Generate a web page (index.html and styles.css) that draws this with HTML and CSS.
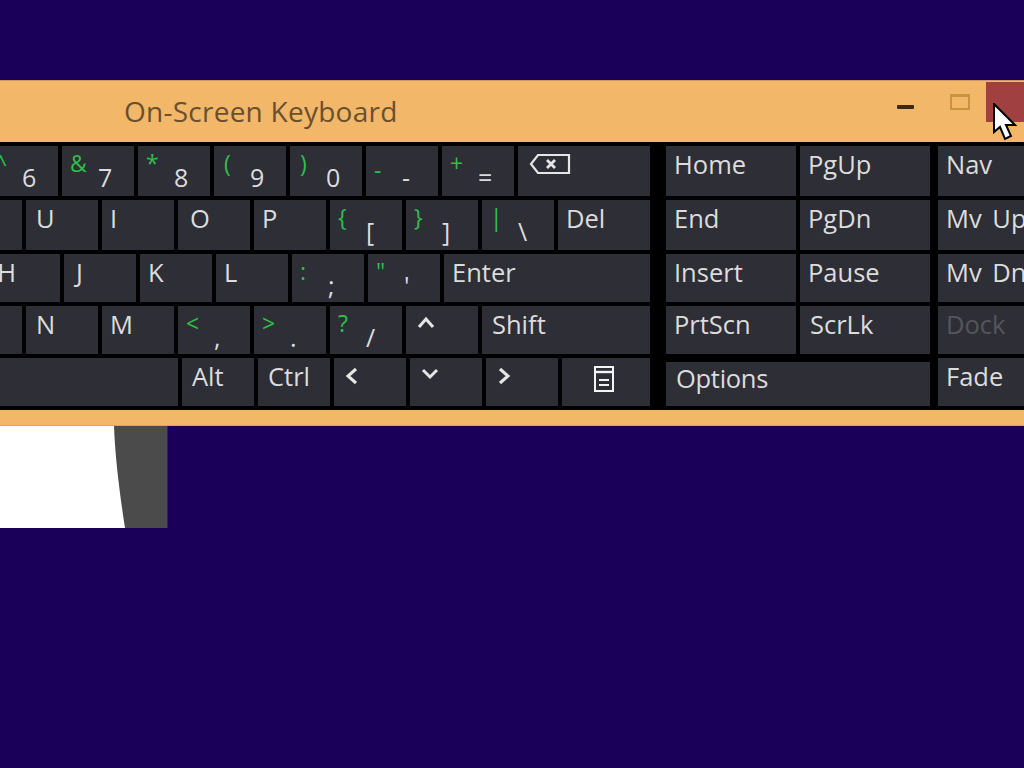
FILE: index.html
```html
<!DOCTYPE html>
<html lang="en">
<head>
<meta charset="utf-8">
<title>On-Screen Keyboard</title>
<link rel="stylesheet" href="styles.css">
</head>
<body>
<main class="desktop">
  <section class="window">
    <header class="titlebar">
      <h1 class="title">On-Screen Keyboard</h1>
      <div class="controls">
        <span class="min"></span>
        <span class="max"></span>
        <span class="close"></span>
      </div>
    </header>
    <div class="board">
      <div class="main-keys">
        <div class="row r1">
          <div class="key w58 dual"><span class="sym s-clip">^</span><span class="low">6</span></div>
          <div class="key dual"><span class="sym">&amp;</span><span class="low">7</span></div>
          <div class="key dual"><span class="sym">*</span><span class="low">8</span></div>
          <div class="key dual"><span class="sym s-paren">(</span><span class="low">9</span></div>
          <div class="key dual"><span class="sym s-paren">)</span><span class="low">0</span></div>
          <div class="key dual"><span class="sym s-minus">-</span><span class="low">-</span></div>
          <div class="key dual"><span class="sym">+</span><span class="low">=</span></div>
          <div class="key w132 icon-key">
            <svg class="bksp" width="42" height="22" viewBox="0 0 42 22"><path d="M9 2H40V20H9L2 11Z" fill="none" stroke="#e6e6e6" stroke-width="2.2"/><path d="M18 7l8 8M26 7l-8 8" stroke="#e6e6e6" stroke-width="2.8"/></svg>
          </div>
        </div>
        <div class="row r2">
          <div class="key w22"></div>
          <div class="key letter">U</div>
          <div class="key tight">I</div>
          <div class="key loose">O</div>
          <div class="key tight">P</div>
          <div class="key dual"><span class="sym">{</span><span class="low">[</span></div>
          <div class="key dual"><span class="sym">}</span><span class="low">]</span></div>
          <div class="key dual"><span class="sym">|</span><span class="low">\</span></div>
          <div class="key w92">Del</div>
        </div>
        <div class="row r3">
          <div class="key w60 clip-h">H</div>
          <div class="key loose">J</div>
          <div class="key tight">K</div>
          <div class="key tight">L</div>
          <div class="key dual"><span class="sym">:</span><span class="low">;</span></div>
          <div class="key dual"><span class="sym">"</span><span class="low">'</span></div>
          <div class="key w206">Enter</div>
        </div>
        <div class="row r3">
          <div class="key w22"></div>
          <div class="key letter">N</div>
          <div class="key tight">M</div>
          <div class="key dual"><span class="sym">&lt;</span><span class="low">,</span></div>
          <div class="key dual"><span class="sym">&gt;</span><span class="low">.</span></div>
          <div class="key dual"><span class="sym">?</span><span class="low">/</span></div>
          <div class="key icon-key">
            <svg class="chev" width="18" height="14" viewBox="0 0 18 14"><path d="M2 12L9 4L16 12" fill="none" stroke="#e6e6e6" stroke-width="3"/></svg>
          </div>
          <div class="key w168 letter">Shift</div>
        </div>
        <div class="row r3">
          <div class="key w178"></div>
          <div class="key letter">Alt</div>
          <div class="key letter">Ctrl</div>
          <div class="key icon-key">
            <svg class="chev" width="14" height="18" viewBox="0 0 14 18"><path d="M11 2L3 9L11 16" fill="none" stroke="#e6e6e6" stroke-width="3"/></svg>
          </div>
          <div class="key icon-key">
            <svg class="chev" width="18" height="14" viewBox="0 0 18 14"><path d="M2 3L9 10L16 3" fill="none" stroke="#e6e6e6" stroke-width="3"/></svg>
          </div>
          <div class="key icon-key">
            <svg class="chev" width="14" height="18" viewBox="0 0 14 18"><path d="M3 2L11 9L3 16" fill="none" stroke="#e6e6e6" stroke-width="3"/></svg>
          </div>
          <div class="key w88 icon-key">
            <svg class="menu" width="20" height="26" viewBox="0 0 20 26"><path d="M1 1H19V25H1Z" fill="none" stroke="#f4f4f4" stroke-width="2"/><path d="M1 6H19" stroke="#f4f4f4" stroke-width="2.4"/><path d="M5 14H15M5 19H15" stroke="#f4f4f4" stroke-width="1.8"/></svg>
          </div>
        </div>
      </div>
      <div class="side-keys">
        <div class="row r1"><div class="key w130">Home</div><div class="key w130">PgUp</div></div>
        <div class="row r2"><div class="key w130">End</div><div class="key w130">PgDn</div></div>
        <div class="row r3"><div class="key w130">Insert</div><div class="key w130">Pause</div></div>
        <div class="row r3"><div class="key w130">PrtScn</div><div class="key w130 letter">ScrLk</div></div>
        <div class="row options-row"><div class="key w264 options">Options</div></div>
      </div>
      <div class="tool-keys">
        <div class="row r1"><div class="key w90">Nav</div></div>
        <div class="row r2"><div class="key w90 spaced">Mv Up</div></div>
        <div class="row r3"><div class="key w90 spaced">Mv Dn</div></div>
        <div class="row r3"><div class="key w90 disabled">Dock</div></div>
        <div class="row r3"><div class="key w90">Fade</div></div>
      </div>
    </div>
  </section>
  <svg class="tile" width="168" height="102" viewBox="0 0 168 102">
    <rect width="167.5" height="102" fill="#4b4b4b"/>
    <path d="M0 0H114C115 30 120 70 125 102H0Z" fill="#ffffff"/>
  </svg>
  <svg class="cursor" width="26" height="38" viewBox="0 0 26 38">
    <path d="M2 1V29L8 24L13 36L19 33L14 22H23Z" fill="#ffffff" stroke="#000000" stroke-width="2" stroke-linejoin="miter"/>
  </svg>
</main>
</body>
</html>
```
FILE: styles.css
```css
* { box-sizing: border-box; }
html, body { margin: 0; height: 100%; }
body { background: #1a0059; overflow: hidden; font-family: "Open Sans", "Noto Sans", sans-serif; }
.desktop { position: relative; width: 1024px; height: 768px; padding-top: 80px; overflow: hidden; }
.window { width: 1024px; height: 346px; background: #f3b769; border-top: 1px solid #c99a60; border-bottom: 1px solid #d6a468; display: flex; flex-direction: column; overflow: hidden; }
.titlebar { height: 61px; flex: none; display: flex; position: relative; }
.title { margin: 0; padding: 12px 0 0 124px; font-size: 28px; line-height: 36px; font-weight: 400; color: #69502f; letter-spacing: 0.25px; white-space: nowrap; }
.controls { margin-left: auto; display: flex; align-items: flex-start; }
.min { width: 17px; height: 4px; background: #3a2a18; margin: 24px 36px 0 0; border-radius: 1px; }
.max { width: 20px; height: 16px; border: 2px solid #c8943f; border-top-width: 3px; margin: 13px 16px 0 0; }
.close { width: 38px; height: 40px; background: #a04040; margin-top: 1px; }
.board { height: 268px; flex: none; background: #000; padding-top: 4px; display: flex; }
.main-keys { width: 650px; flex: none; display: flex; flex-direction: column; gap: 4px; overflow: hidden; }
.side-keys { width: 264px; flex: none; margin-left: 16px; display: flex; flex-direction: column; gap: 4px; }
.tool-keys { width: 86px; flex: none; margin-left: 8px; display: flex; flex-direction: column; gap: 4px; overflow: hidden; }
.row { display: flex; gap: 4px; justify-content: flex-end; flex: none; }
.side-keys .row, .tool-keys .row { justify-content: flex-start; }
.r1, .r2 { height: 50px; }
.r3 { height: 48px; }
.options-row { height: 44px; margin-top: 4px; }
.key { width: 72px; flex: none; height: 100%; background: #2e2e36; color: #dcdcdc; font-size: 25.5px; line-height: 34px; padding: 1px 0 0 8px; white-space: nowrap; display: flex; align-items: flex-start; overflow: hidden; }
.letter { padding-left: 10px; }
.tight { padding-left: 8px; }
.loose { padding-left: 12px; }
.spaced { word-spacing: 4px; }
.w22 { width: 22px; }
.w58 { width: 58px; }
.w60 { width: 60px; }
.w88 { width: 88px; }
.w90 { width: 90px; }
.w92 { width: 92px; }
.w130 { width: 130px; }
.w132 { width: 132px; }
.w168 { width: 168px; }
.w178 { width: 178px; }
.w206 { width: 206px; }
.w264 { width: 264px; }
.clip-h { justify-content: flex-end; padding-right: 44px; padding-left: 0; }
.dual { padding: 0; }
.sym { width: 28px; margin-left: 8px; flex: none; color: #2cc04a; font-size: 23px; font-weight: 500; line-height: 30px; margin-top: 2px; }
.low { flex: none; font-size: 25px; line-height: 30px; margin-top: 16px; }
.s-clip { margin-left: -6px; width: 28px; }
.s-paren { margin-left: 10px; width: 26px; }
.s-minus { margin-top: 9px; }
.options { padding: 0 0 0 10px; line-height: 32px; letter-spacing: -0.3px; }
.disabled { color: #55555a; }
.icon-key { padding: 0; }
.bksp { margin: 7px 0 0 11px; }
.chev { margin: 9px 0 0 11px; }
.menu { margin: 8px 0 0 32px; }
.tile { display: block; }
.cursor { position: absolute; left: 992px; top: 103px; }
```
